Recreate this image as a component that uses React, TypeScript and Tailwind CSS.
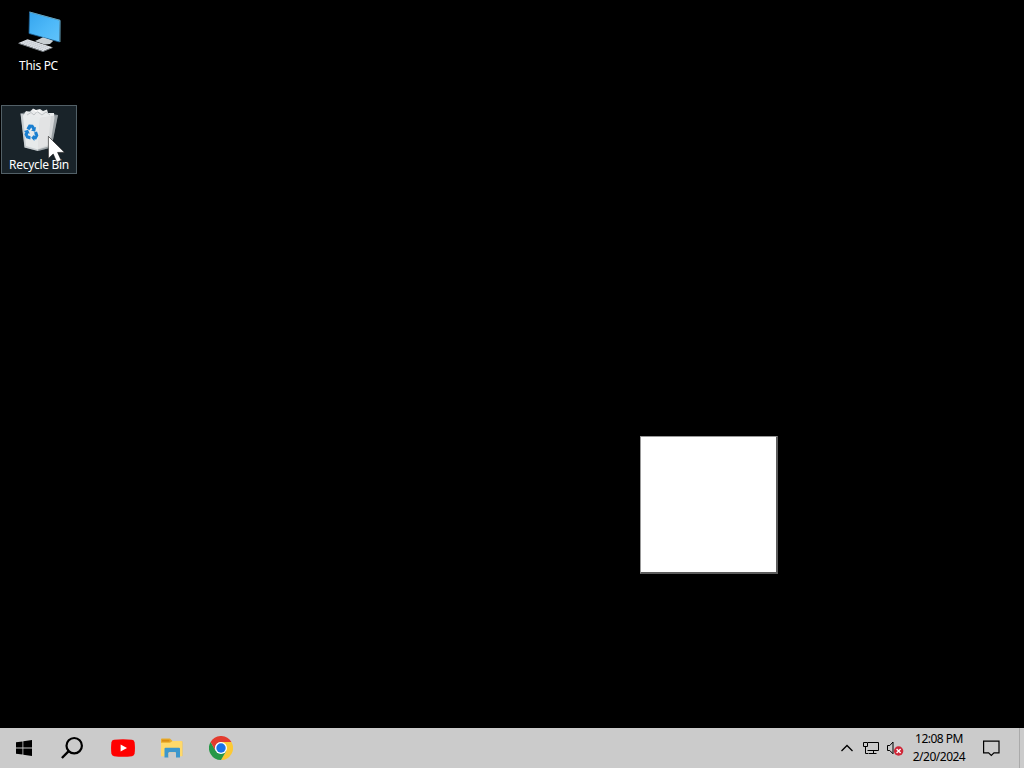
import type { ReactNode } from "react";

const PcIcon = () => (
  <svg width="44" height="44" viewBox="17 9 44 44">
    <defs>
      <linearGradient id="screen" x1="0" y1="0" x2="1" y2="1">
        <stop offset="0" stopColor="#35a5ee" />
        <stop offset="0.55" stopColor="#4db8f8" />
        <stop offset="1" stopColor="#61c3fb" />
      </linearGradient>
    </defs>
    <path d="M35 41 44 37 53 41 50 44 45 44.5Z" fill="#c3cbd0" />
    <path d="M29.5 12 60 20.3 59.5 42 29 33.5Z" fill="url(#screen)" stroke="#1d6093" strokeWidth="0.8" />
    <path d="M29.5 12 60 20.3V42" fill="none" stroke="#78b7cc" strokeWidth="0.8" />
    <path d="M36 41.2 43 37.6 53 40.8 49.5 43.6 43.5 43.8Z" fill="#c8ced2" />
    <path d="M18.5 43 27.5 39.3 52.5 47.2 43 51.2Z" fill="#dde1e6" />
    <path d="M18.5 43 43 51.2 52.5 47.2V48L43 52 18.5 43.7Z" fill="#8e969d" />
    <path d="M22 42.8 43 49.6M24.5 41.8 46 48.6M26.5 40.7 48.5 47.6" stroke="#a9b0b8" strokeWidth="0.6" strokeDasharray="1.4 0.7" />
  </svg>
);

const BinIcon = () => (
  <svg width="44" height="46" viewBox="17 107 44 46">
    <path d="M20.5 113.5 33 110 58 115 51.5 147.5 38 151 24.5 147.5Z" fill="#737d83" />
    <path d="M23 116 26 111 30 112 33 108.5 36 110 40 109 43 111 47 109.5 48 113 54 113 54.5 118 50 146 38 149.5 26 146Z" fill="#e9ebec" />
    <path d="M20.5 113.5 40 118 38 151 24.5 147.5Z" fill="#e6e9eb" fillOpacity="0.75" />
    <path d="M40 118 58 115 51.5 147.5 38 151Z" fill="#bfc3c5" fillOpacity="0.5" />
    <path d="M40 118 51 116 48 145 38 149Z" fill="#e5e6e6" fillOpacity="0.8" />
    <path d="M27 115 31 112.5 34 115 37 111.5 42 115 46 112 50 115" fill="none" stroke="#b9bdc0" strokeWidth="0.9" />
    <path d="M33 109 36 112 39 110 42 113Z" fill="#fff" />
    <g fill="#1a7fd0">
      <path d="M26.5 128.5 28.8 124.6 33 124.8 34.8 127.5 36 127 35.2 131.7 31 130.4 32.4 129.4 31.3 127.6 29.4 130.2Z" />
      <path d="M24 131 28 129.8 29.8 133.7 28.3 133.2 27.7 135.3 30.6 136.2 30.4 139.5 26.3 138.2 24.4 134.3 25.4 132.6Z" />
      <path d="M34 132.6 37 131.4 38.4 135.4 36.2 139.4 34.4 139.2V141L31.2 137.8 34.4 134.5V136.1L35.4 136.1Z" />
    </g>
  </svg>
);

const Pointer = () => (
  <svg className="absolute left-[45px] top-[29px]" width="20" height="28" viewBox="0 0 20 28">
    <path d="M1.4 1.4V23.4L6.2 19 9.8 27.2 14.2 25.3 10.6 17.4H17.6Z" fill="#fff" stroke="#111" strokeWidth="0.6" />
  </svg>
);

const WindowsIcon = () => (
  <svg width="16" height="16" viewBox="0 0 16 16">
    <path d="M0 2.3 6.5 1.4V7.6H0ZM7.3 1.3 16 0V7.6H7.3ZM0 8.4H6.5V14.6L0 13.7ZM7.3 8.4H16V16L7.3 14.7Z" />
  </svg>
);

const SearchIcon = () => (
  <svg width="24" height="24" viewBox="0 0 24 24" fill="none" stroke="#000" strokeWidth="2.2">
    <circle cx="14.2" cy="9.7" r="7.7" />
    <path d="M8.7 15.2 1.9 22" strokeWidth="2.4" />
  </svg>
);

const YoutubeIcon = () => (
  <svg width="24" height="18" viewBox="0 0 24 18">
    <path d="M3 .8Q12-.3 21 .8 23.3 1.1 23.6 3.4 24.3 9 23.6 14.6 23.3 16.9 21 17.2 12 18.3 3 17.2.7 16.9.4 14.6-.3 9 .4 3.4.7 1.1 3 .8Z" fill="#f00" />
    <path d="M9.6 5.4 16 9 9.6 12.6Z" fill="#fff" />
  </svg>
);

const FolderIcon = () => (
  <svg width="22" height="20" viewBox="0 0 22 20">
    <path d="M0 1.2Q0 .5 .8 .5H9L11.5 3H20.5Q21.3 3 21.3 4V18H0Z" fill="#e9ad2c" />
    <path d="M0 4.8H9L11.5 3H20.5Q21.3 3 21.3 4V18.3H0Z" fill="#ffd96a" />
    <path d="M1 1.7H8.5V3.6H1Z" fill="#d98d16" />
    <path d="M3.5 19.5V10.8Q3.5 9.8 4.5 9.8H18Q19 9.8 19 10.8V19.5H15V15.2Q15 14.2 14 14.2H8.5Q7.5 14.2 7.5 15.2V19.5Z" fill="#3d97cc" />
    <path d="M7.5 19.5V15.2Q7.5 14.2 8.5 14.2H14Q15 14.2 15 15.2V19.5Z" fill="#cbcbcb" />
  </svg>
);

const ChromeIcon = () => (
  <svg width="24" height="24" viewBox="0 0 24 24">
    <path d="M12 12V6H22.4A12 12 0 0 1 12 24L17.2 15Z" fill="#fcc934" />
    <path d="M12 12 17.2 15 12 24A12 12 0 0 1 1.6 6L6.8 15Z" fill="#279847" />
    <path d="M1.6 6 6.8 15A6 6 0 0 1 12 6H22.4A12 12 0 0 0 1.6 6Z" fill="#e33b2e" />
    <circle cx="12" cy="12" r="6" fill="#fff" />
    <circle cx="12" cy="12" r="4.7" fill="#1b73e8" />
  </svg>
);

const NetworkIcon = () => (
  <svg width="17" height="15" viewBox="0 0 17 15" fill="none" stroke="#000">
    <path d="M5 1.5H15.5V9.5H4.5M10.5 9.5V12.5M5.5 12.5H13.5" />
    <path d="M.5 1.5H4.5V5.5H.5ZM2.5 5.5V12.5H5" />
  </svg>
);

const MutedIcon = () => (
  <svg width="18" height="16" viewBox="0 0 18 16" fill="none">
    <path d="M.5 5.5H2.8L6 2V13.8L2.8 10.5H.5Z" stroke="#000" />
    <circle cx="11.6" cy="11" r="4.7" fill="#cf2738" />
    <path d="M9.6 9 13.6 13M13.6 9 9.6 13" stroke="#fff" strokeWidth="1.3" />
  </svg>
);

const TaskButton = ({ children }: { children: ReactNode }) => (
  <button className="flex h-10 w-[49px] items-center justify-center">{children}</button>
);

export default function App() {
  return (
    <div className="relative flex h-screen w-screen flex-col overflow-hidden bg-black font-['Noto_Sans','Open_Sans',sans-serif] text-xs">
      <main className="flex-1">
        <div className="flex h-[105px] w-[77px] flex-col items-center pt-[9px] text-white">
          <PcIcon />
          <span className="mt-[5px] leading-4 tracking-[-0.3px]">This PC</span>
        </div>
        <div className="relative ml-px flex h-[69px] w-[76px] flex-col items-center border border-[#526067] bg-[#192329] pt-px text-white">
          <BinIcon />
          <span className="mt-1 whitespace-nowrap leading-4 tracking-[-0.3px]">Recycle Bin</span>
          <Pointer />
        </div>
      </main>

      <div className="absolute left-[640px] top-[436px] h-[138px] w-[138px] border border-b-2 border-r-2 border-[#999] border-b-[#5c5c5c] border-r-[#5c5c5c] bg-white" />

      <footer className="flex h-10 items-center bg-[#cbcbcb] text-black">
        <button className="flex h-10 w-12 items-center justify-center"><WindowsIcon /></button>
        <button className="flex h-10 w-[50px] items-center pl-3"><SearchIcon /></button>
        <TaskButton><YoutubeIcon /></TaskButton>
        <TaskButton><FolderIcon /></TaskButton>
        <TaskButton><ChromeIcon /></TaskButton>
        <div className="ml-auto flex h-full items-center">
          <svg className="mr-[10px]" width="12" height="8" viewBox="0 0 12 8" fill="none" stroke="#000" strokeWidth="1.3">
            <path d="M.5 7 6 1.5 11.5 7" />
          </svg>
          <NetworkIcon />
          <span className="ml-[7px]"><MutedIcon /></span>
          <div className="ml-1 w-[60px] whitespace-nowrap text-center leading-[18px] tracking-[-0.5px]">
            <div>12:08 PM</div>
            <div>2/20/2024</div>
          </div>
          <svg className="ml-[14px] mr-[19px]" width="17" height="17" viewBox="0 0 17 17" fill="none" stroke="#000" strokeWidth="1.2">
            <path d="M.6 1.1H16V12.8H11L8.3 15.5 5.6 12.8H.6Z" />
          </svg>
          <div className="h-full w-[5px] border-l border-[#aaa]" />
        </div>
      </footer>
    </div>
  );
}
